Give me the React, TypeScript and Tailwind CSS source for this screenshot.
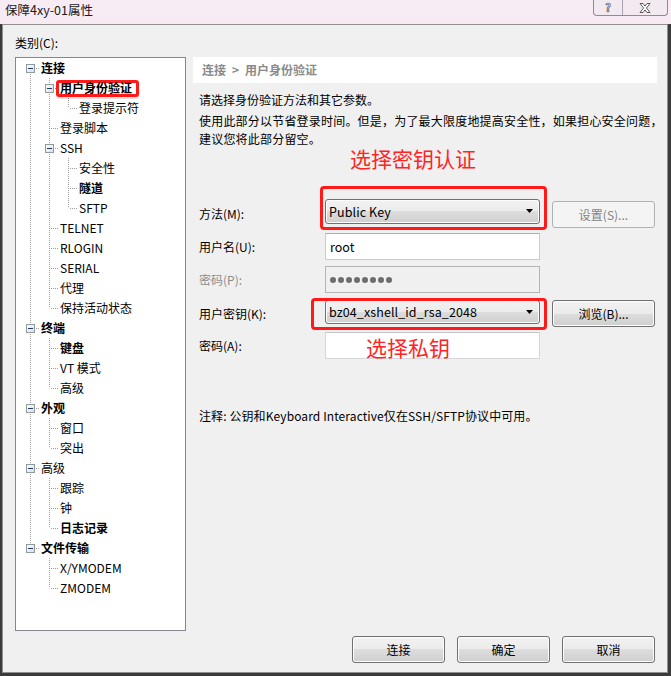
import React from "react";

type T = { label: string; bold?: boolean; sel?: boolean; children?: T[] };
type Row = { t: T; level: number; last: boolean; first: boolean; anc: boolean[] };

const tree: T[] = [
  {
    label: "连接",
    bold: true,
    children: [
      { label: "用户身份验证", bold: true, sel: true, children: [{ label: "登录提示符" }] },
      { label: "登录脚本" },
      { label: "SSH", children: [{ label: "安全性" }, { label: "隧道", bold: true }, { label: "SFTP" }] },
      { label: "TELNET" },
      { label: "RLOGIN" },
      { label: "SERIAL" },
      { label: "代理" },
      { label: "保持活动状态" },
    ],
  },
  { label: "终端", bold: true, children: [{ label: "键盘", bold: true }, { label: "VT 模式" }, { label: "高级" }] },
  { label: "外观", bold: true, children: [{ label: "窗口" }, { label: "突出" }] },
  { label: "高级", children: [{ label: "跟踪" }, { label: "钟" }, { label: "日志记录", bold: true }] },
  { label: "文件传输", bold: true, children: [{ label: "X/YMODEM" }, { label: "ZMODEM" }] },
];

function flatten(nodes: T[], level: number, anc: boolean[], out: Row[]) {
  nodes.forEach((n, i) => {
    const last = i === nodes.length - 1;
    out.push({ t: n, level, last, first: level === 0 && i === 0, anc });
    if (n.children) flatten(n.children, level + 1, [...anc, !last], out);
  });
  return out;
}

const rows = flatten(tree, 0, [], []);
const LINE = "#a0a0a0";

function Cell({ cont }: { cont: boolean }) {
  return (
    <svg width="19" height="20" className="shrink-0 block">
      {cont && <line x1="9.5" y1="0" x2="9.5" y2="20" stroke={LINE} strokeDasharray="1 1" />}
    </svg>
  );
}

function OwnCell({ first, last, kids }: { first: boolean; last: boolean; kids: boolean }) {
  return (
    <svg width="19" height="20" className="shrink-0 block">
      {!first && <line x1="9.5" y1="0" x2="9.5" y2="10" stroke={LINE} strokeDasharray="1 1" />}
      {!last && <line x1="9.5" y1="10" x2="9.5" y2="20" stroke={LINE} strokeDasharray="1 1" />}
      <line x1="11" y1="10.5" x2="19" y2="10.5" stroke={LINE} strokeDasharray="1 1" />
      {kids && (
        <>
          <defs>
            <linearGradient id="bx" x1="0" y1="0" x2="1" y2="1">
              <stop offset="0" stopColor="#ffffff" />
              <stop offset="1" stopColor="#d8dde6" />
            </linearGradient>
          </defs>
          <rect x="5.5" y="6.5" width="8" height="8" fill="url(#bx)" stroke="#919b9c" />
          <line x1="7" y1="10.5" x2="12" y2="10.5" stroke="#233c6a" />
        </>
      )}
    </svg>
  );
}

function Btn({ children, disabled, className = "" }: { children: React.ReactNode; disabled?: boolean; className?: string }) {
  return (
    <div
      className={
        "flex items-center justify-center rounded-[3px] border leading-[16px] " +
        (disabled
          ? "border-[#adb2b5] bg-[#f4f4f4] text-[#838383] "
          : "border-[#707070] bg-[linear-gradient(to_bottom,#f2f2f2_0%,#ebebeb_50%,#dddddd_50%,#cfcfcf_100%)] text-black shadow-[inset_0_0_0_1px_#fcfcfc] ") +
        className
      }
    >
      {children}
    </div>
  );
}

function Combo({ text, h }: { text: string; h: string }) {
  return (
    <div
      className={
        "w-[215px] flex items-center rounded-[3px] border border-[#707070] bg-[linear-gradient(to_bottom,#f2f2f2_0%,#ebebeb_50%,#dddddd_50%,#cfcfcf_100%)] shadow-[inset_0_0_0_1px_#fcfcfc] pl-[3px] pr-[5px] " +
        h
      }
    >
      <span className="text-[12.5px] leading-[16px] tracking-[0.1px]">{text}</span>
      <svg width="8" height="5" className="ml-auto">
        <polygon points="0,0 7,0 3.5,4" fill="#000" />
      </svg>
    </div>
  );
}

export default function App() {
  return (
    <div className="w-[671px] h-[676px] flex flex-col overflow-hidden bg-[linear-gradient(to_bottom,#f7ebf4,#efdcec)] [font-family:'Noto_Sans_CJK_SC','Noto_Sans',sans-serif] text-[12px] text-black">
      {/* title bar */}
      <div className="h-[24px] flex items-start shrink-0">
        <div className="pl-[5px] pt-[2px] leading-[16px] text-[12.5px] text-[#1a1a1a]">保障4xy-01属性</div>
        <div className="ml-auto mr-[3px] flex h-[16px] rounded-b-[4px] border border-t-0 border-[#8e8a9b] bg-[#f3e9f1]">
          <div className="w-[29px] border-r border-[#a9a3b3] flex items-center justify-center">
            <span className="text-[11px] leading-[15px] font-bold text-[#f8f8f8] [-webkit-text-stroke:0.6px_#4a4a4a]">?</span>
          </div>
          <div className="w-[44px] flex items-center justify-center">
            <svg width="12" height="10" viewBox="0 0 12 10">
              <path d="M1 0.5 L4 0.5 L6 3 L8 0.5 L11 0.5 L7.5 5 L11 9.5 L8 9.5 L6 7 L4 9.5 L1 9.5 L4.5 5 Z" fill="#ffffff" stroke="#4a4a4a" strokeWidth="0.9" />
            </svg>
          </div>
        </div>
      </div>

      {/* client */}
      <div className="flex-1 flex border-l-2 border-r-[3px] border-b-[3px] border-[#3b3b3b]">
        <div className="flex-1 flex flex-col border border-[#8f8f8f] bg-[#f0f0f0] pl-[12px] pt-[10px]">
          <div className="leading-[16px] h-[16px]">类别(C):</div>
          <div className="mt-[6px] flex h-[574px]">
            {/* tree */}
            <div className="w-[171px] h-[574px] border border-[#828790] bg-white pl-[5px] shrink-0">
              {rows.map((r, i) => (
                <div key={i} className="flex h-[20px] items-center">
                  {r.anc.map((c, j) => (
                    <Cell key={j} cont={c} />
                  ))}
                  <OwnCell first={r.first} last={r.last} kids={!!r.t.children} />
                  {r.t.sel ? (
                    <span className="relative ml-[1px] leading-[16px] font-bold whitespace-nowrap">
                      <span className="absolute left-[-4px] right-[-7px] top-[0px] bottom-[-1px] rounded-[3px] border-[3px] border-[#ff1a1a] shadow-[0_2px_1px_rgba(0,0,0,0.12)]" />
                      <span className="relative">{r.t.label}</span>
                    </span>
                  ) : (
                    <span className={"ml-[1px] leading-[16px] whitespace-nowrap " + (r.t.bold ? "font-bold" : "")}>{r.t.label}</span>
                  )}
                </div>
              ))}
            </div>

            {/* right panel */}
            <div className="relative ml-[7px] w-[464px] flex flex-col">
              <div className="h-[26px] bg-white pl-[9px] flex items-center font-bold text-[#8a8a8a] leading-[16px] whitespace-nowrap">
                连接<span className="mx-[6px]">&gt;</span>用户身份验证
              </div>
              <div className="pl-[6px] mt-[8px] leading-[18px] whitespace-nowrap">请选择身份验证方法和其它参数。</div>
              <div className="pl-[6px] mt-[3px] leading-[18px] whitespace-nowrap tracking-[0.2px]">
                使用此部分以节省登录时间。但是，为了最大限度地提高安全性，如果担心安全问题，
                <br />
                建议您将此部分留空。
              </div>

              {/* method */}
              <div className="mt-[51px] flex h-[29px] pl-[6px]">
                <div className="w-[126px] self-center leading-[16px]">方法(M):</div>
                <Combo text="Public Key" h="h-[25px]" />
                <Btn disabled className="ml-[12px] mt-[2px] w-[103px] h-[27px]">设置(S)...</Btn>
              </div>
              {/* username */}
              <div className="mt-[5px] flex h-[27px] pl-[6px]">
                <div className="w-[126px] self-center leading-[16px]">用户名(U):</div>
                <div className="w-[215px] h-[27px] border border-[#c9cbd0] border-t-[#abadb3] bg-white flex items-center pl-[4px]">
                  <span className="text-[12.5px] leading-[16px]">root</span>
                </div>
              </div>
              {/* password disabled */}
              <div className="mt-[6px] flex h-[27px] pl-[6px]">
                <div className="w-[126px] self-center leading-[16px] text-[#8d8d8d]">密码(P):</div>
                <div className="w-[215px] h-[27px] border border-[#b5b5b5] bg-[#f0f0f0] flex items-center gap-[2px] pl-[4px]">
                  {Array.from({ length: 8 }).map((_, i) => (
                    <div key={i} className="w-[6px] h-[6px] rounded-full bg-[#6d6d6d]" />
                  ))}
                </div>
              </div>
              {/* key */}
              <div className="mt-[7px] flex h-[27px] pl-[6px]">
                <div className="w-[126px] self-center leading-[16px]">用户密钥(K):</div>
                <Combo text="bz04_xshell_id_rsa_2048" h="h-[24px]" />
                <Btn className="ml-[12px] w-[103px] h-[27px]">浏览(B)...</Btn>
              </div>
              {/* passphrase */}
              <div className="mt-[5px] flex h-[27px] pl-[6px]">
                <div className="w-[126px] self-center leading-[16px]">密码(A):</div>
                <div className="w-[215px] h-[27px] border border-[#d5d7db] border-t-[#c3c5c9] bg-white" />
              </div>

              <div className="mt-[48px] pl-[6px] leading-[18px] whitespace-nowrap tracking-[0.1px]">注释: 公钥和Keyboard Interactive仅在SSH/SFTP协议中可用。</div>

              {/* annotations */}
              <div className="absolute left-[127px] top-[129px] w-[227px] h-[44px] rounded-[4px] border-[3px] border-[#ff1a1a]" />
              <div className="absolute left-[118px] top-[241px] w-[236px] h-[32px] rounded-[4px] border-[3px] border-[#ff1a1a]" />
              <div className="absolute left-[157px] top-[89px] text-[21px] leading-[24px] text-[#ff2424] whitespace-nowrap">选择密钥认证</div>
              <div className="absolute left-[173px] top-[278px] text-[21px] leading-[24px] text-[#ff2424] whitespace-nowrap">选择私钥</div>
            </div>
          </div>

          {/* buttons */}
          <div className="mt-[5px] flex justify-end gap-[12px] pr-[12px]">
            <Btn className="w-[93px] h-[27px]">连接</Btn>
            <Btn className="w-[93px] h-[27px]">确定</Btn>
            <Btn className="w-[93px] h-[27px]">取消</Btn>
          </div>
        </div>
      </div>
    </div>
  );
}
